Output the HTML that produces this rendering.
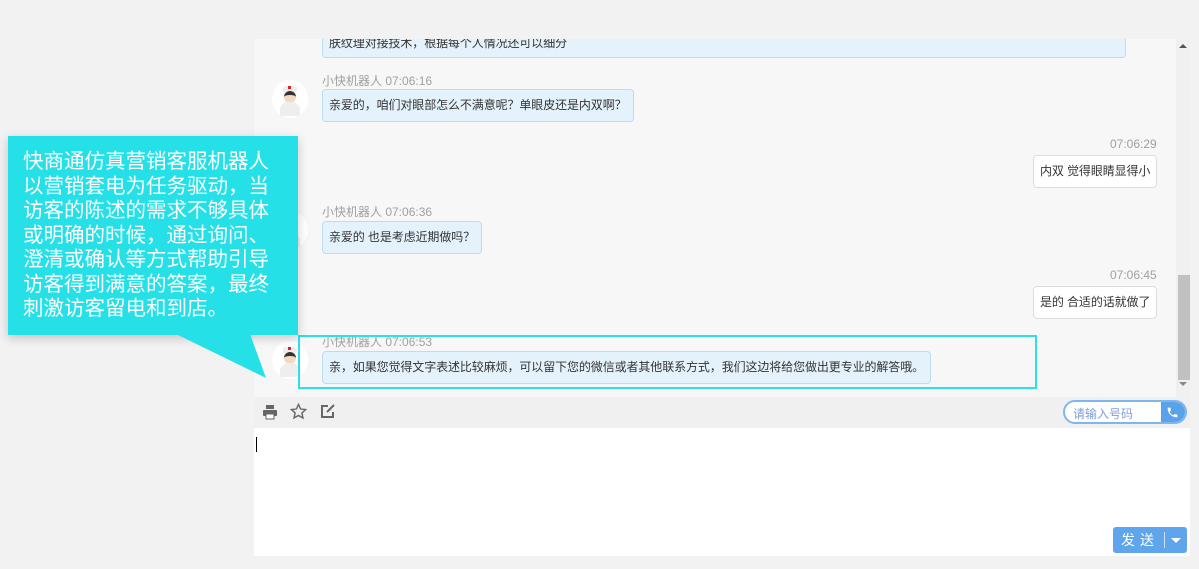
<!DOCTYPE html>
<html><head><meta charset="utf-8"><style>
*{margin:0;padding:0;box-sizing:border-box}
body{width:1199px;height:569px;background:#f2f2f2;position:relative;overflow:hidden;font-family:"Liberation Sans","Noto Sans CJK SC",sans-serif;font-size:12px;color:#333}
.chat{position:absolute;left:254px;top:39px;width:922px;height:358px;background:#f7f7f7;overflow:hidden}
.sb{position:absolute;left:1176px;top:39px;width:14px;height:358px;background:#f0f0f0}
.thumb{position:absolute;left:1178px;top:275px;width:12px;height:105px;background:#c1c1c1}
.ab{position:absolute;width:0;height:0;border-left:4px solid transparent;border-right:4px solid transparent}
.b{position:absolute;background:#e4f2fb;border:1px solid #bcdcef;border-radius:4px;padding:0 6px;line-height:31px;white-space:nowrap;letter-spacing:-0.1px}
.r{background:#fff;border:1px solid #ddd}
.name{position:absolute;color:#a0a0a0;font-size:12px}
.av{position:absolute;width:36px;height:38px;border-radius:50%;background:#fff}
.av i{position:absolute;left:11px;top:6px;width:14px;height:6px;background:#eee;border-radius:3px 3px 0 0}
.av b{position:absolute;left:12px;top:11px;width:12px;height:12px;background:#f4d8c0;border-radius:50%;border-top:4px solid #333}
.av s{position:absolute;left:8px;top:22px;width:20px;height:14px;background:#eee;border-radius:8px 8px 2px 2px}
.av u{position:absolute;left:16px;top:6px;width:3px;height:3px;background:#d22}
.tb{position:absolute;left:254px;top:397px;width:936px;height:31px;background:#f0f0f0}
.inp{position:absolute;left:254px;top:428px;width:936px;height:128px;background:#fff}
.call{position:absolute;left:8px;top:136px;width:290px;height:199px;background:#26e0e7;color:#fff;font-size:20.5px;line-height:24.5px;padding:14px 0 0 15px;box-shadow:0 3px 10px rgba(0,0,0,.2)}
</style></head><body>
<div class="chat">
 <div class="b" style="left:68px;top:-10px;width:804px;height:29px;line-height:26px">肤纹理对接技术，根据每个人情况还可以细分</div>
 <div class="name" style="left:68px;top:33px">小快机器人 07:06:16</div>
 <div class="av" style="left:18px;top:41px"><i></i><u></u><b></b><s></s></div>
 <div class="b" style="left:68px;top:50px">亲爱的，咱们对眼部怎么不满意呢？单眼皮还是内双啊？</div>
 <div class="name" style="left:856px;top:98px">07:06:29</div>
 <div class="b r" style="left:779px;top:116px">内双 觉得眼睛显得小</div>
 <div class="name" style="left:68px;top:164px">小快机器人 07:06:36</div>
 <div class="av" style="left:18px;top:172px"><i></i><u></u><b></b><s></s></div>
 <div class="b" style="left:68px;top:182px">亲爱的 也是考虑近期做吗？</div>
 <div class="name" style="left:856px;top:229px">07:06:45</div>
 <div class="b r" style="left:779px;top:247px">是的 合适的话就做了</div>
 <div class="name" style="left:68px;top:294px">小快机器人 07:06:53</div>
 <div class="av" style="left:18px;top:302px"><i></i><u></u><b></b><s></s></div>
 <div class="b" style="left:68px;top:312px">亲，如果您觉得文字表述比较麻烦，可以留下您的微信或者其他联系方式，我们这边将给您做出更专业的解答哦。</div>
 <div style="position:absolute;left:44px;top:296px;width:739px;height:54px;border:2px solid #2ee0e6"></div>
</div>
<div class="sb"></div><div class="thumb"></div>
<div class="ab" style="left:1179px;top:44px;border-bottom:4px solid #555"></div>
<div class="ab" style="left:1179px;top:382px;border-top:4px solid #888"></div>
<div class="tb">
 <svg style="position:absolute;left:8px;top:7px" width="16" height="16" viewBox="0 0 16 16" fill="#666"><rect x="4" y="1" width="8" height="4"/><rect x="1" y="6" width="14" height="6" rx="1"/><rect x="4" y="10" width="8" height="5" fill="#fff" stroke="#666"/></svg>
 <svg style="position:absolute;left:36px;top:6px" width="17" height="17" viewBox="0 0 24 24" fill="none" stroke="#666" stroke-width="2"><path d="M12 2l3 6.5 7 .8-5.2 4.8 1.5 7L12 17.6 5.7 21l1.5-7L2 9.3l7-.8z"/></svg>
 <svg style="position:absolute;left:66px;top:6px" width="16" height="16" viewBox="0 0 16 16" fill="none" stroke="#666" stroke-width="2"><path d="M13 9v5H2V3h6"/><path d="M14 2L7 9"/></svg>
 <div style="position:absolute;left:809px;top:3px;width:124px;height:24px;border:2px solid #7fb6ee;border-radius:12px;background:#fff;overflow:hidden">
  <span style="position:absolute;left:8px;top:3px;color:#7f9fd8;font-size:12px">请输入号码</span>
  <div style="position:absolute;right:0;top:0;width:24px;height:22px;background:#5aa2ea"><svg style="position:absolute;left:5px;top:4px" width="13" height="13" viewBox="0 0 24 24" fill="#fff"><path d="M6.6 10.8a15 15 0 006.6 6.6l2.2-2.2c.3-.3.7-.4 1-.2 1.1.4 2.3.6 3.6.6.6 0 1 .4 1 1V20c0 .6-.4 1-1 1A17 17 0 013 4c0-.6.4-1 1-1h3.5c.6 0 1 .4 1 1 0 1.3.2 2.5.6 3.6.1.3 0 .7-.2 1z"/></svg></div>
 </div>
</div>
<div class="inp"><div style="position:absolute;left:2px;top:9px;width:1px;height:15px;background:#000"></div>
 <div style="position:absolute;left:859px;top:99px;width:74px;height:26px;background:#5ea5ec;border-radius:3px;color:#fff;font-size:14px;line-height:26px">
  <span style="position:absolute;left:8px;top:0">发</span><span style="position:absolute;left:27px;top:0">送</span>
  <span style="position:absolute;left:51px;top:5px;width:1px;height:16px;background:#cfe3f8"></span><span style="position:absolute;left:58px;top:11px;width:0;height:0;border-left:5px solid transparent;border-right:5px solid transparent;border-top:5px solid #fff"></span></div>
</div>
<div class="call">快商通仿真营销客服机器人<br>以营销套电为任务驱动，当<br>访客的陈述的需求不够具体<br>或明确的时候，通过询问、<br>澄清或确认等方式帮助引导<br>访客得到满意的答案，最终<br>刺激访客留电和到店。</div>
<svg style="position:absolute;left:0;top:0" width="1199" height="569"><polygon points="176,334 250,334 266,378" fill="#26e0e7"/></svg>
</body></html>
